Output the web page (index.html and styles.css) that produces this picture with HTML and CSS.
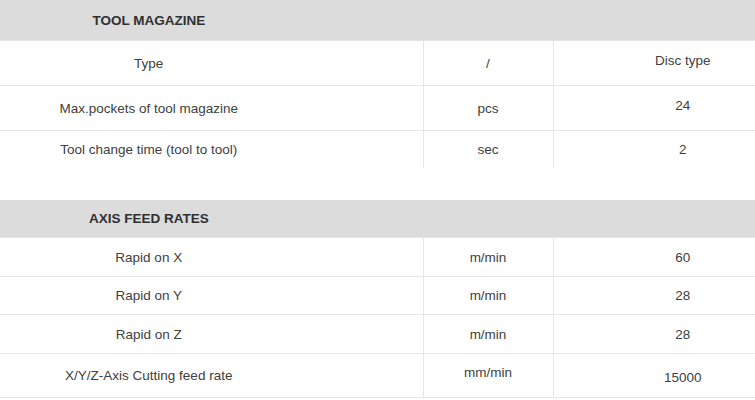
FILE: index.html
```html
<!DOCTYPE html>
<html>
<head>
<meta charset="utf-8">
<link rel="stylesheet" href="styles.css">
</head>
<body>
<div class="page">
  <table class="spec spec-tool">
    <colgroup><col class="c1"><col class="c2"><col class="c3"></colgroup>
    <tr class="head"><th>TOOL MAGAZINE</th><th></th><th></th></tr>
    <tr class="r45"><td>Type</td><td>/</td><td><span class="up">Disc type</span></td></tr>
    <tr class="r45"><td>Max.pockets of tool magazine</td><td>pcs</td><td><span class="up">24</span></td></tr>
    <tr class="r38 last"><td>Tool change time (tool to tool)</td><td>sec</td><td>2</td></tr>
  </table>
  <table class="spec spec-axis">
    <colgroup><col class="c1"><col class="c2"><col class="c3"></colgroup>
    <tr class="head h37"><th>AXIS FEED RATES</th><th></th><th></th></tr>
    <tr class="r39"><td>Rapid on X</td><td>m/min</td><td>60</td></tr>
    <tr class="r38"><td>Rapid on Y</td><td>m/min</td><td>28</td></tr>
    <tr class="r39"><td>Rapid on Z</td><td>m/min</td><td>28</td></tr>
    <tr class="r44"><td>X/Y/Z-Axis Cutting feed rate</td><td><span class="up">mm/min</span></td><td><span class="down">15000</span></td></tr>
  </table>
</div>
</body>
</html>
```

FILE: styles.css
```css
html, body {
  margin: 0;
  padding: 0;
  background: #ffffff;
}

.page {
  width: 755px;
  height: 400px;
  overflow: hidden;
  font-family: "Liberation Sans", Arial, Helvetica, sans-serif;
  font-size: 13.5px;
  color: #404040;
}

.spec {
  width: 755px;
  border-collapse: collapse;
  table-layout: fixed;
}

.spec-axis {
  margin-top: 32px;
}

.c1 { width: 423px; }
.c2 { width: 130px; }
.c3 { width: 202px; }

.spec th,
.spec td {
  padding: 0;
  text-align: center;
  vertical-align: middle;
  font-weight: normal;
}

.spec th:first-child,
.spec td:first-child {
  padding-right: 125px;
}

.spec th:last-child,
.spec td:last-child {
  padding-left: 57px;
}

.head th {
  background: #dcdcdc;
  height: 40px;
  font-weight: bold;
  color: #303030;
  border-bottom: 1px solid #e4e4e4;
}

.head.h37 th {
  height: 37px;
}

.spec td {
  border-bottom: 1px solid #e6e6e6;
}

.spec td + td {
  border-left: 1px solid #e6e6e6;
}

.spec tr.last td {
  border-bottom: none;
}

.r45 td { height: 44px; }
.r44 td { height: 43px; }
.r39 td { height: 38px; }
.r38 td { height: 37px; }

.up {
  display: inline-block;
  margin-bottom: 6px;
}

.down {
  display: inline-block;
  margin-top: 4px;
}
```
